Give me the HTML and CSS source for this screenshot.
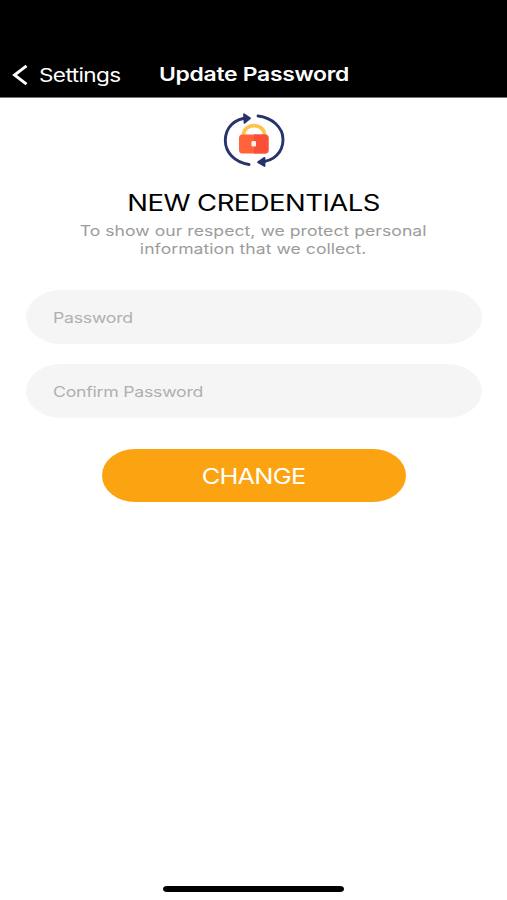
FILE: index.html
```html
<!DOCTYPE html>
<html lang="en">
<head>
<meta charset="utf-8">
<title>Update Password</title>
<link rel="stylesheet" href="styles.css">
</head>
<body>
<div class="screen">
  <header class="navbar">
    <svg class="back-icon" width="16" height="22" viewBox="0 0 16 22"><path d="M14.500 1.800 2.500 11l12 9.200" fill="none" stroke="#fff" stroke-width="2.900"/></svg>
    <span class="wide back-label">Settings</span>
    <h1 class="wide nav-title">Update Password</h1>
  </header>
  <main class="content">
    <svg class="lock-icon" width="62" height="54" viewBox="0 0 62 54">
      <g fill="none" stroke="#29336b" stroke-width="2.900" stroke-linecap="round">
        <path d="M26 51.500C12 49.500 2.300 39.500 2.300 27.500C2.300 15 11 5.500 25 5"/>
        <path d="M35 3C49 4.500 60 14.500 60 26.500C60 39 51 48.500 37 49"/>
      </g>
      <path d="M21 1.200 27 5.200 21.500 9.800zM41.500 44.800 35 49.200 41.500 53z" fill="#29336b" stroke="#29336b" stroke-width="1.800" stroke-linejoin="round"/>
      <path d="M20.500 22C20.500 9.500 41.500 9.500 41.500 22" fill="none" stroke="#ffc34d" stroke-width="3.600"/>
      <rect x="16" y="21.500" width="29.500" height="19" rx="3.500" fill="#ff6337"/>
      <path d="M31 21.500H42a3.500 3.500 0 0 1 3.500 3.500V37a3.500 3.500 0 0 1-3.500 3.500H31z" fill="#fb5038"/>
      <rect x="28.500" y="28" width="4.500" height="5.500" rx="1.200" fill="#fff0e8"/>
    </svg>
    <h2 class="wide heading">NEW CREDENTIALS</h2>
    <p class="wide intro">To show our respect, we protect personal<br>information that we collect.</p>
    <div class="field"><span class="wide">Password</span></div>
    <div class="field"><span class="wide">Confirm Password</span></div>
    <button class="submit" type="button"><span class="wide">CHANGE</span></button>
  </main>
  <div class="home-indicator"></div>
</div>
</body>
</html>
```
FILE: styles.css
```css
* { box-sizing: border-box; }
body { margin: 0; background: #fff; font-family: Inter, "Liberation Sans", sans-serif; }
.screen { height: 900px; display: flex; flex-direction: column; }
.wide { display: inline-block; white-space: nowrap; transform: scaleX(1.22); }
.navbar { height: 98px; padding: 52px 0 0 12px; display: flex; align-items: center; background: #000; border-bottom: 1px solid #777; color: #fff; }
.back-icon { flex: none; }
.back-label, .nav-title { transform-origin: left center; line-height: 24px; margin: 0; flex: none; }
.back-label { width: 120px; margin-left: 11px; font-size: 18.5px; letter-spacing: -0.5px; }
.nav-title { font-size: 18.8px; font-weight: 600; letter-spacing: -0.24px; }
.content { flex: 1; padding-top: 15px; display: flex; flex-direction: column; align-items: center; }
.lock-icon { flex: none; }
.heading { margin: 22px 0 0; font-size: 22.5px; font-weight: 400; line-height: 28px; letter-spacing: -0.42px; color: #000; }
.intro { margin: 5px 0 32px; font-size: 14.4px; line-height: 18px; letter-spacing: 0.04px; text-align: center; color: #9c9c9c; }
.field { width: 456px; height: 54px; margin-bottom: 20px; padding-left: 27px; display: flex; align-items: center; border-radius: 35px / 27px; background: #f5f5f5; color: #b0b0b0; font-size: 14.5px; letter-spacing: -0.2px; }
.field .wide { transform-origin: left center; }
.submit { width: 304px; height: 53px; margin-top: 11px; padding: 1px 0 0; border: 0; border-radius: 33px / 26.5px; background: #fca311; color: #fff; font: 400 20.8px Inter, sans-serif; letter-spacing: -0.6px; }
.home-indicator { width: 181px; height: 6px; margin: 0 auto 8px; border-radius: 4px / 3px; background: #000; }
```
